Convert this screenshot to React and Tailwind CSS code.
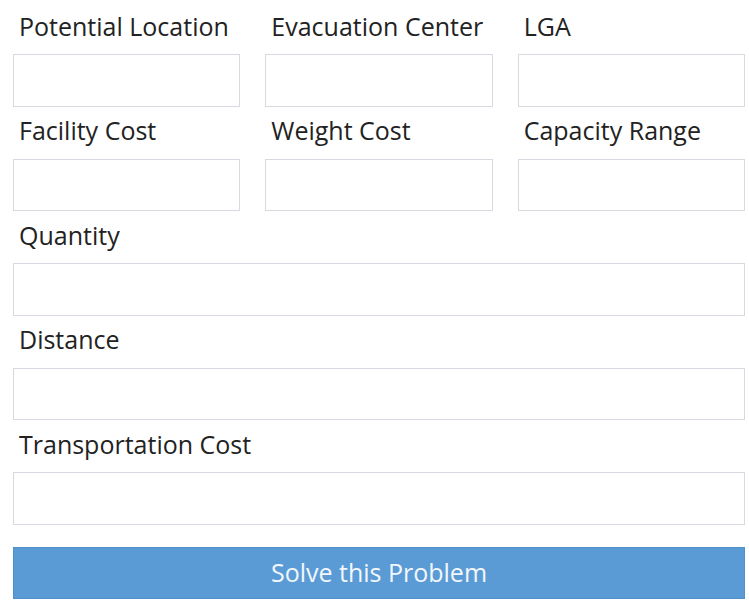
const Field = ({ label }) => (
  <div className="flex flex-col">
    <div className="h-[52px] flex items-center pl-[6px] pb-[4px] text-[25px] text-[#222222] leading-none">{label}</div>
    <div className="h-[52.5px] border border-[#d6dae0] bg-white"></div>
  </div>
);

const App = () => {
  return (
    <div className="w-[749px] h-[605px] bg-white pl-[13px] pr-[4px] pt-[2px]" style={{ fontFamily: '"Open Sans", sans-serif' }}>
      <div className="grid grid-cols-3 gap-x-[25px]">
        <Field label="Potential Location" />
        <Field label="Evacuation Center" />
        <Field label="LGA" />
        <Field label="Facility Cost" />
        <Field label="Weight Cost" />
        <Field label="Capacity Range" />
      </div>
      <Field label="Quantity" />
      <Field label="Distance" />
      <Field label="Transportation Cost" />
      <button className="mt-[22.5px] w-full h-[52px] pb-[2px] bg-[#5b9bd5] text-[#f2f7fc] text-[25px] leading-none border border-[#4f8fca]">
        Solve this Problem
      </button>
    </div>
  );
};

export default App;
